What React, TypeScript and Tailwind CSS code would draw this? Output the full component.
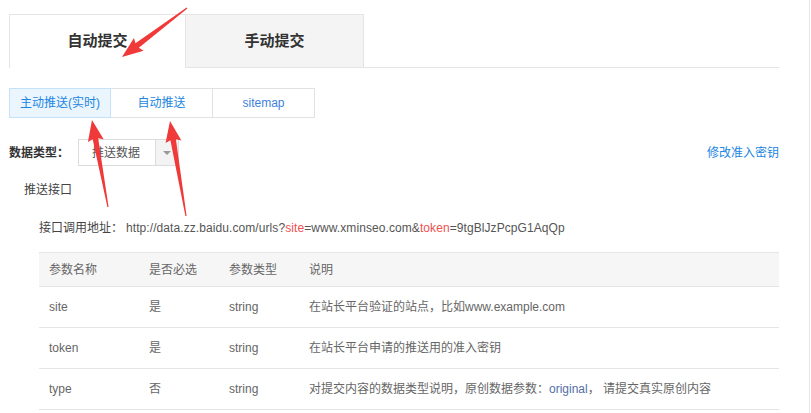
import React from 'react';

const cjk = { fontFamily: '"Liberation Sans", "Noto Sans CJK SC", sans-serif' };

const rows = [
    { name: 'site', req: '是', type: 'string', desc: <>在站长平台验证的站点，比如www.example.com</> },
    { name: 'token', req: '是', type: 'string', desc: <>在站长平台申请的推送用的准入密钥</> },
    {
        name: 'type',
        req: '否',
        type: 'string',
        desc: <>对提交内容的数据类型说明，原创数据参数：<span className="text-[#5470a8]">original</span>， 请提交真实原创内容</>,
    },
];

// red marker arrows drawn over the page (tail -> tip)
const Arrow: React.FC<{ x1: number; y1: number; x2: number; y2: number }> = ({ x1, y1, x2, y2 }) => {
    const len = Math.hypot(x2 - x1, y2 - y1);
    const deg = (Math.atan2(y2 - y1, x2 - x1) * 180) / Math.PI;
    const h = 19;
    return (
        <polygon
            transform={`translate(${x1} ${y1}) rotate(${deg})`}
            points={`0,-0.6 ${len - h},-2.8 ${len - h - 2},-8 ${len},0 ${len - h - 2},8 ${len - h},2.8 0,0.6`}
            fill="#f03a3a"
        />
    );
};

const App: React.FC = () => {
    return (
        <div className="relative w-[811px] h-[413px] overflow-hidden bg-white text-[12px]" style={cjk}>
            <div className="w-[810px] h-[413px] border-r border-[#e6e6e6] pl-[9px] pr-[30px] pt-[14px]">
                {/* Top tabs */}
                <div className="flex">
                    <div className="w-[177px] h-[54px] border-l border-t border-r border-[#e5e5e5] flex items-center justify-center text-[15px] font-bold text-[#333]">
                        自动提交
                    </div>
                    <div className="flex-1 flex flex-col">
                        <div className="w-[178px] h-[54px] border-t border-r border-b border-[#e5e5e5] bg-[#f4f4f4] flex items-center justify-center text-[15px] font-bold text-[#333]">
                            手动提交
                        </div>
                    </div>
                </div>
                <div className="-mt-px ml-[177px] border-b border-[#e5e5e5]" />

                {/* Sub tabs */}
                <div className="flex mt-[20px]">
                    <div className="w-[102px] h-[30px] border border-[#c6e2f8] bg-[#eaf5fe] flex items-center justify-center text-[#1c86e0]">
                        主动推送(实时)
                    </div>
                    <div className="w-[102px] h-[30px] border border-l-0 border-[#e2e2e2] flex items-center justify-center text-[#1c86e0]">
                        自动推送
                    </div>
                    <div className="w-[102px] h-[30px] border border-l-0 border-[#e2e2e2] flex items-center justify-center text-[#3d7fe0]">
                        sitemap
                    </div>
                </div>

                {/* Data type row */}
                <div className="flex items-center justify-between mt-[21px] h-[27px]">
                    <div className="flex items-center">
                        <span className="w-[69px] font-bold text-[#333]">数据类型：</span>
                        <div className="flex w-[101px] h-[27px] border border-[#dcdcdc]">
                            <div className="flex-1 flex items-center pl-[13px] text-[#555]">推送数据</div>
                            <div className="w-[23px] bg-[#f3f3f3] border-l border-[#dcdcdc] flex items-center justify-center">
                                <span className="w-0 h-0 border-l-[4px] border-r-[4px] border-t-[4px] border-l-transparent border-r-transparent border-t-[#999]" />
                            </div>
                        </div>
                    </div>
                    <a className="text-[#1c86e0]">修改准入密钥</a>
                </div>

                <div className="mt-[12px] h-[24px] flex items-center pl-[15px] text-[#444]">推送接口</div>

                <div className="mt-[14px] h-[24px] flex items-center pl-[30px] text-[#555]">
                    <span className="text-[#444]">接口调用地址：</span>
                    <span className="ml-[3px] tracking-[0.08px]">
                        http://data.zz.baidu.com/urls?<span className="text-[#f05050]">site</span>=www.xminseo.com&amp;
                        <span className="text-[#f05050]">token</span>=9tgBlJzPcpG1AqQp
                    </span>
                </div>

                {/* Params table */}
                <div className="mt-[12px] ml-[30px] text-[#666]">
                    <div className="flex h-[35px] items-center bg-[#f6f6f6] border-t border-b border-[#e5e5e5]">
                        <span className="w-[110px] pl-[10px]">参数名称</span>
                        <span className="w-[80px]">是否必选</span>
                        <span className="w-[80px]">参数类型</span>
                        <span>说明</span>
                    </div>
                    {rows.map((r) => (
                        <div key={r.name} className="flex h-[41px] items-center border-b border-[#e5e5e5]">
                            <span className="w-[110px] pl-[10px]">{r.name}</span>
                            <span className="w-[80px]">{r.req}</span>
                            <span className="w-[80px]">{r.type}</span>
                            <span>{r.desc}</span>
                        </div>
                    ))}
                </div>
            </div>

            <svg className="absolute inset-0 pointer-events-none" width="811" height="413">
                <Arrow x1={187} y1={8} x2={122} y2={57} />
                <Arrow x1={108} y1={207} x2={92} y2={120} />
                <Arrow x1={186} y1={216} x2={170} y2={121} />
            </svg>
        </div>
    );
};

export default App;
